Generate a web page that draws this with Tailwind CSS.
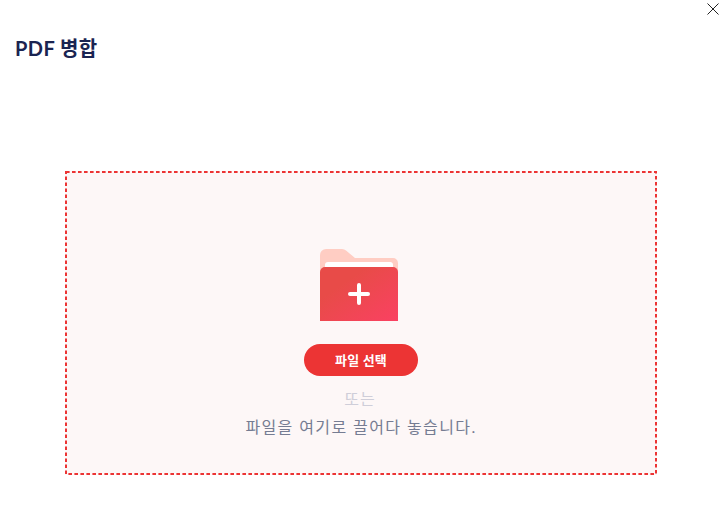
<!DOCTYPE html>
<html lang="ko">
<head>
    <meta charset="UTF-8">
    <meta name="viewport" content="width=device-width, initial-scale=1.0">
    <title>PDF 병합</title>
    <script src="https://cdn.jsdelivr.net/npm/@tailwindcss/browser@4"></script>
</head>
<body class="bg-white h-[524px] w-[727px] overflow-hidden relative font-['Lato','Noto_Sans_CJK_KR',sans-serif]">

    <button class="absolute left-[707px] top-[3px] w-3 h-3 block" aria-label="닫기">
        <svg width="12" height="12" viewBox="0 0 12 12" fill="none" stroke="#222" stroke-width="1"><path d="M0.5 0.5 L11.5 11.5 M11.5 0.5 L0.5 11.5"/></svg>
    </button>

    <header class="pl-[15px] pt-[35px] h-[171px]">
        <h1 class="text-[20px] leading-[26px] font-bold text-[#1a2451] tracking-[0.4px]">PDF 병합</h1>
    </header>

    <main class="relative ml-[65px] w-[592px] h-[304px] bg-[#fdf7f7] flex flex-col items-center pt-[78px]">
        <!-- dash pattern of the drop zone: css dashed comes out too long -->
        <svg class="absolute inset-0" width="592" height="304" fill="none">
            <rect x="1" y="1" width="590" height="302" stroke="#ec3434" stroke-width="2" stroke-dasharray="3.6 2.4"/>
        </svg>
        <svg width="78" height="72" viewBox="0 0 78 72" class="block mr-[4px]">
            <defs>
                <linearGradient id="folderFill" x1="0" y1="0" x2="1" y2="1">
                    <stop offset="0.3" stop-color="#e84b48"/>
                    <stop offset="1" stop-color="#fa4162"/>
                </linearGradient>
            </defs>
            <path d="M0 6 a6 6 0 0 1 6 -6 H22 a6 6 0 0 1 4 1.5 L35 9 H73 a5 5 0 0 1 5 5 V40 H0 Z" fill="#ffcdc3"/>
            <path d="M5 16 a3 3 0 0 1 3 -3 H70 a3 3 0 0 1 3 3 V30 H5 Z" fill="#ffffff"/>
            <path d="M0 23 a5 5 0 0 1 5 -5 H73 a5 5 0 0 1 5 5 V72 H0 Z" fill="url(#folderFill)"/>
            <path d="M39 36 V54 M30 45 H48" stroke="#fff" stroke-width="4" stroke-linecap="round" fill="none"/>
        </svg>
        <button class="mt-[23px] w-[114px] h-[32px] rounded-full bg-[#ec3434] text-white text-[13px] font-bold leading-none tracking-[0.2px]">파일 선택</button>
        <p class="mt-[13px] text-[16px] leading-[20px] text-[#cfced9] tracking-[1px] mr-[2px]">또는</p>
        <p class="mt-[7px] text-[16px] leading-[22px] text-[#757c92] tracking-[1.4px]">파일을 여기로 끌어다 놓습니다.</p>
    </main>

</body>
</html>
